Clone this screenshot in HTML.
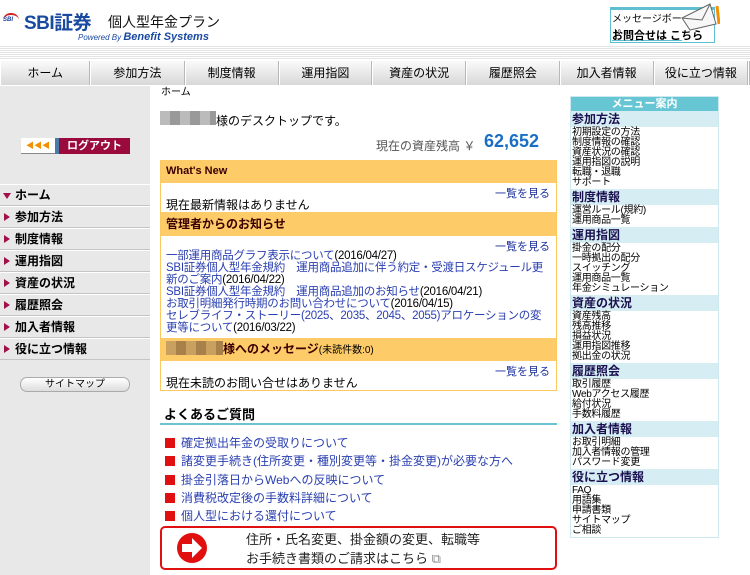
<!DOCTYPE html>
<html><head><meta charset="utf-8"><style>
*{margin:0;padding:0;box-sizing:border-box}
body{width:750px;height:575px;overflow:hidden;background:#fff;font-family:"Liberation Sans","Noto Sans CJK JP",sans-serif;font-size:12px;color:#000;position:relative}
.a{position:absolute}
.stripe{left:0;top:45px;width:750px;height:15px;background:repeating-linear-gradient(#fff 0,#fff 1px,#e4e4e4 1px,#e4e4e4 2px)}
.nav{left:0;top:61px;width:750px;height:24px;display:flex;background:linear-gradient(#fafafa,#d8d8d8)}
.nav div{height:24px;border-right:1px solid #b8b8b8;border-left:1px solid #fff;text-align:center;line-height:24px;font-size:12px}
.side{left:0;top:86px;width:150px;height:489px;background:#e8e8e8}
.lm{left:0;width:150px;height:22px;border-bottom:1px solid #c4c4c4;border-top:1px solid #fff;font-weight:bold;font-size:12px;line-height:20px;padding-left:15px}
.lm:before{content:"";position:absolute;left:4px;top:6px;border-left:6px solid #a0104a;border-top:4px solid transparent;border-bottom:4px solid transparent}
.lm.h:before{left:3px;top:8px;border-top:6px solid #a0104a;border-left:4px solid transparent;border-right:4px solid transparent;border-bottom:0}
.box{left:160px;width:397px;border-left:1px solid #fcc860;border-right:1px solid #fcc860}
.hd{background:#fdcb68;font-weight:bold;color:#3a0000;font-size:12px;padding-left:5px}
.more{position:absolute;right:6px;color:#1a2f9c;font-size:11px}
.lnk{color:#2a3fb0}
.rm{left:570px;top:96px;width:149px;border:1px solid #cde8ef;background:#fff}
.rh{background:#d6eef3;font-weight:bold;color:#1a1050;font-size:12px;height:16px;line-height:16px;padding-left:1px}
.ri{font-size:10px;line-height:10px;padding:1px 0 1px 1px;letter-spacing:-0.3px}
.faq{left:165px;font-size:12px;color:#2a3fb0}
.faq:before{content:"";display:inline-block;width:10px;height:10px;background:#e01010;margin-right:6px;vertical-align:-1px}
</style></head><body>
<div class="a" style="left:3px;top:13px;width:16px;height:14px;border-radius:50% 50% 0 0;border-top:2px solid #d02020;font-size:6px;font-weight:bold;color:#1a3f9a;font-style:italic;line-height:10px">SBI</div>
<div class="a" style="left:24px;top:8px;font-size:19px;font-weight:bold;color:#1a4aa0;letter-spacing:-0.5px">SBI証券</div>
<div class="a" style="left:108px;top:12px;font-size:14px;color:#111">個人型年金プラン</div>
<div class="a" style="left:78px;top:31px;font-size:8px;color:#1a4aa0;font-style:italic">Powered By <b style="font-size:11px">Benefit Systems</b></div>
<div class="a" style="left:610px;top:7px;width:105px;height:36px;border:1px solid #5fbecf;border-top:3px solid #5fbecf"></div>
<div class="a" style="left:612px;top:10px;font-size:10px;width:70px;border-bottom:1px solid #5fbecf">メッセージボード</div>
<div class="a" style="left:612px;top:27px;font-size:11px;font-weight:bold">お問合せは こちら</div>
<svg class="a" style="left:680px;top:2px" width="40" height="30"><polygon points="2,16 30,2 36,22 10,28" fill="#f7f7f7" stroke="#666"/><polyline points="2,16 22,18 30,2" fill="none" stroke="#666"/><line x1="37" y1="4" x2="39" y2="22" stroke="#f39000" stroke-width="3"/></svg>
<div class="a stripe"></div>
<div class="a nav">
<div style="width:91px">ホーム</div><div style="width:95px">参加方法</div><div style="width:95px">制度情報</div><div style="width:94px">運用指図</div><div style="width:95px">資産の状況</div><div style="width:94px">履歴照会</div><div style="width:95px">加入者情報</div><div style="width:95px">役に立つ情報</div><div style="flex:1"></div>
</div>
<div class="a side"></div>
<div class="a" style="left:21px;top:138px;width:34px;height:16px;background:#fff;border-bottom:1px solid #888;color:#f39000;font-size:8px;line-height:16px;text-align:center">◀◀◀</div>
<div class="a" style="left:55px;top:138px;width:75px;height:16px;background:#9a0a3c;border-left:4px solid #4a7aa8;color:#fff;font-weight:bold;font-size:11px;line-height:16px;text-align:center">ログアウト</div>
<div class="a lm h" style="top:184px">ホーム</div>
<div class="a lm" style="top:206px">参加方法</div>
<div class="a lm" style="top:228px">制度情報</div>
<div class="a lm" style="top:250px">運用指図</div>
<div class="a lm" style="top:272px">資産の状況</div>
<div class="a lm" style="top:294px">履歴照会</div>
<div class="a lm" style="top:316px">加入者情報</div>
<div class="a lm" style="top:338px">役に立つ情報</div>
<div class="a" style="left:20px;top:377px;width:110px;height:15px;border:1px solid #aaa;border-radius:7px;background:linear-gradient(#fff,#ddd);font-size:10px;text-align:center;line-height:13px">サイトマップ</div>
<div class="a" style="left:161px;top:83px;font-size:10px">ホーム</div>
<div class="a" style="left:160px;top:111px;width:56px;height:14px;background:repeating-linear-gradient(90deg,#bbb 0,#bbb 10px,#999 10px,#999 20px)"></div>
<div class="a" style="left:216px;top:112px;font-size:12px">様のデスクトップです。</div>
<div class="a" style="left:376px;top:137px;font-size:12px;color:#555">現在の資産残高 ￥</div>
<div class="a" style="left:484px;top:131px;font-size:18px;font-weight:bold;color:#1a6fc4">62,652</div>
<div class="a box" style="top:160px;height:231px;border-bottom:1px solid #fcc860">
<div class="hd" style="height:23px;line-height:23px;font-size:11px">What's New</div>
<div style="position:relative;height:29px"><span class="more" style="top:2px">一覧を見る</span><div style="position:absolute;left:5px;top:13px">現在最新情報はありません</div></div>
<div class="hd" style="height:24px;line-height:24px">管理者からのお知らせ</div>
<div style="position:relative;height:102px"><span class="more" style="top:2px">一覧を見る</span>
<div style="position:absolute;left:5px;top:14px;right:4px;line-height:12px;font-size:11.5px;letter-spacing:-0.25px"><span class="lnk">一部運用商品グラフ表示について</span>(2016/04/27)<br><span class="lnk">SBI証券個人型年金規約　運用商品追加に伴う約定・受渡日スケジュール更新のご案内</span>(2016/04/22)<br><span class="lnk">SBI証券個人型年金規約　運用商品追加のお知らせ</span>(2016/04/21)<br><span class="lnk">お取引明細発行時期のお問い合わせについて</span>(2016/04/15)<br><span class="lnk">セレブライフ・ストーリー(2025、2035、2045、2055)アロケーションの変更等について</span>(2016/03/22)</div></div>
<div class="hd" style="height:23px;line-height:23px;position:relative"><span style="display:inline-block;width:57px;height:14px;vertical-align:-2px;background:repeating-linear-gradient(90deg,#c9a060 0,#c9a060 10px,#a8804a 10px,#a8804a 20px)"></span>様へのメッセージ<span style="font-weight:normal;font-size:10px;color:#000">(未読件数:0)</span></div>
<div style="position:relative;height:30px"><span class="more" style="top:2px">一覧を見る</span><div style="position:absolute;left:5px;top:13px">現在未読のお問い合せはありません</div></div>
</div>
<div class="a" style="left:164px;top:404px;font-size:13px;font-weight:bold">よくあるご質問</div>
<div class="a" style="left:160px;top:423px;width:397px;height:2px;background:#6cc2d0"></div>
<div class="a faq" style="top:434px">確定拠出年金の受取りについて</div>
<div class="a faq" style="top:452px">諸変更手続き(住所変更・種別変更等・掛金変更)が必要な方へ</div>
<div class="a faq" style="top:471px">掛金引落日からWebへの反映について</div>
<div class="a faq" style="top:489px">消費税改定後の手数料詳細について</div>
<div class="a faq" style="top:507px">個人型における還付について</div>
<div class="a" style="left:160px;top:526px;width:397px;height:44px;border:2px solid #e01010;border-radius:5px"></div>
<svg class="a" style="left:175px;top:532px" width="34" height="32"><circle cx="17" cy="16" r="15" fill="#e01010"/><polygon points="7,12 17,12 17,6 27,16 17,26 17,20 7,20" fill="#fff"/></svg>
<div class="a" style="left:246px;top:530px;font-size:13px;line-height:19px;color:#222">住所・氏名変更、掛金額の変更、転職等<br>お手続き書類のご請求はこちら <span style="color:#888">⧉</span></div>
<div class="a rm">
<div style="background:#66c6d4;color:#fff;font-weight:bold;text-align:center;height:14px;line-height:14px;font-size:11px">メニュー案内</div>
<div class="rh">参加方法</div><div class="ri">初期設定の方法<br>制度情報の確認<br>資産状況の確認<br>運用指図の説明<br>転職・退職<br>サポート</div>
<div class="rh">制度情報</div><div class="ri">運営ルール(規約)<br>運用商品一覧</div>
<div class="rh">運用指図</div><div class="ri">掛金の配分<br>一時拠出の配分<br>スイッチング<br>運用商品一覧<br>年金シミュレーション</div>
<div class="rh">資産の状況</div><div class="ri">資産残高<br>残高推移<br>損益状況<br>運用指図推移<br>拠出金の状況</div>
<div class="rh">履歴照会</div><div class="ri">取引履歴<br>Webアクセス履歴<br>給付状況<br>手数料履歴</div>
<div class="rh">加入者情報</div><div class="ri">お取引明細<br>加入者情報の管理<br>パスワード変更</div>
<div class="rh">役に立つ情報</div><div class="ri">FAQ<br>用語集<br>申請書類<br>サイトマップ<br>ご相談</div>
</div>
</body></html>
